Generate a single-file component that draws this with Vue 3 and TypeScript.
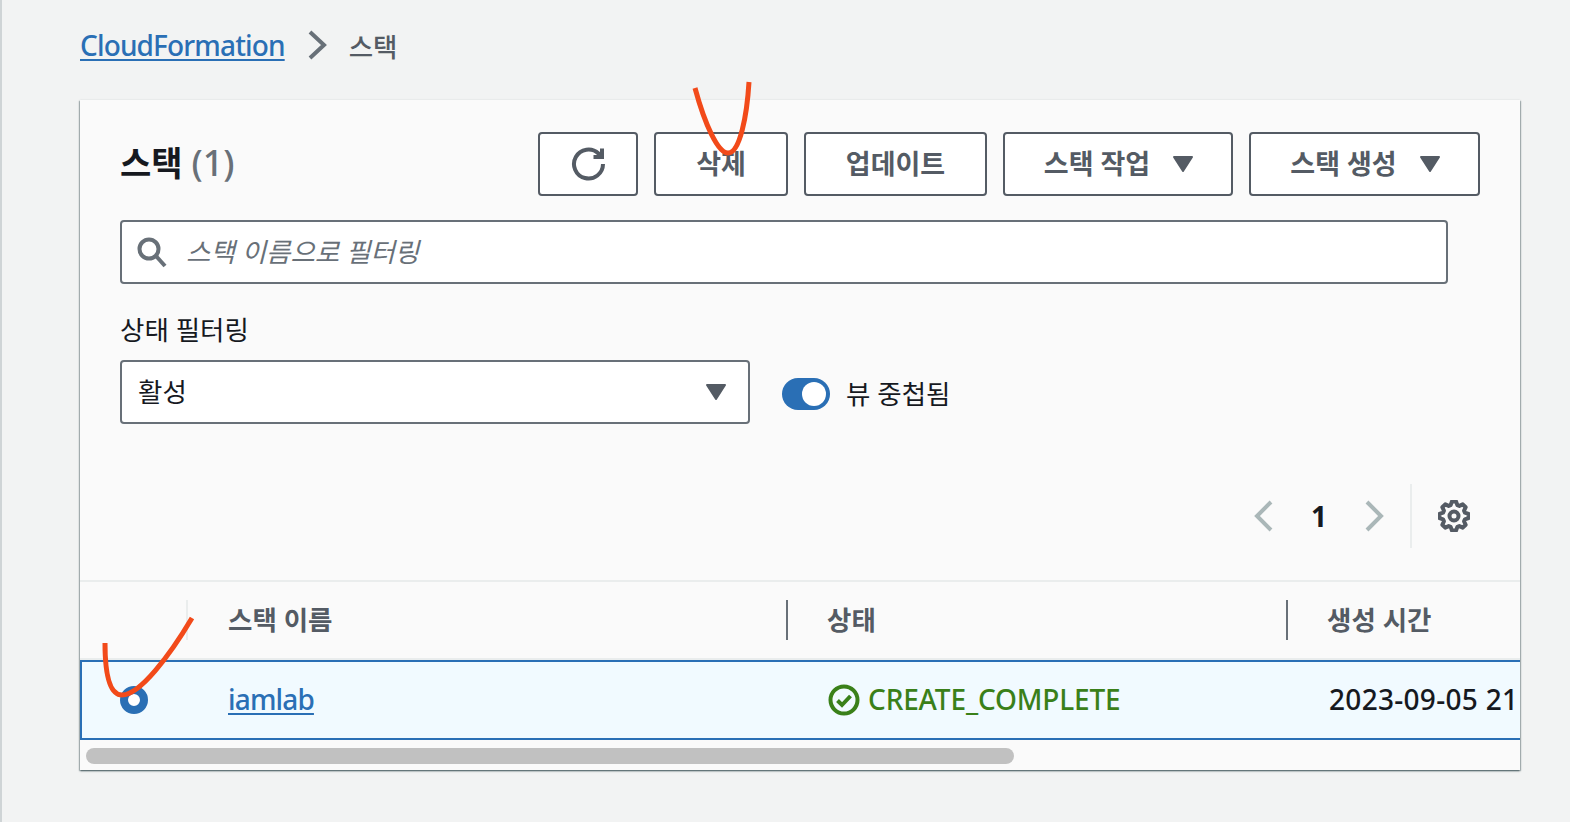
<script setup lang="ts">
import { computed } from 'vue'

const actions = [
  { label: '삭제', width: 134 },
  { label: '업데이트', width: 183 },
  { label: '스택 작업', width: 230, caret: true },
  { label: '스택 생성', width: 231, caret: true }
]

// 8 tooth outline for the preferences icon
const gearPath = computed(() => {
  const pts: string[] = []
  for (let i = 0; i < 8; i++) {
    const a = (i * Math.PI) / 4 - Math.PI / 8
    const step = Math.PI / 4
    const corners: [number, number][] = [
      [11.4, a + step * 0.12],
      [14.6, a + step * 0.32],
      [14.6, a + step * 0.68],
      [11.4, a + step * 0.88]
    ]
    for (const [r, t] of corners) {
      pts.push(`${(16 + r * Math.cos(t)).toFixed(2)} ${(16 + r * Math.sin(t)).toFixed(2)}`)
    }
  }
  return 'M' + pts.join('L') + 'Z'
})
</script>

<template>
  <div class="page">
    <nav class="crumbs">
      <a class="link">CloudFormation</a>
      <svg class="crumbIcon" width="20" height="30" viewBox="0 0 20 30">
        <path d="M3 2l14 13L3 28" />
      </svg>
      <span class="crumbCurrent">스택</span>
    </nav>

    <section class="card">
      <div class="cardBody">
        <div class="topRow">
          <h1 class="title">스택 <span class="count">(1)</span></h1>
          <div class="actions">
            <button class="btn iconBtn">
              <svg width="36" height="36" viewBox="0 0 36 36">
                <path d="M32 18a14.500 14.500 0 1 1-4.500-10.500L31 11" />
                <path d="M31 2.500V11h-8.500" />
              </svg>
            </button>
            <button
              v-for="action in actions"
              :key="action.label"
              class="btn"
              :class="{ withCaret: action.caret }"
              :style="{ width: action.width + 'px' }"
            >
              <span class="btnText">{{ action.label }}</span>
              <svg v-if="action.caret" class="caret" width="22" height="18" viewBox="0 0 22 18">
                <path d="M2 2h18l-9 14z" />
              </svg>
            </button>
          </div>
        </div>

        <div class="field search">
          <svg class="searchIcon" width="32" height="32" viewBox="0 0 32 32">
            <circle cx="13" cy="13" r="9.500" />
            <path d="M20 20l9 10" />
          </svg>
          <span class="placeholder">스택 이름으로 필터링</span>
        </div>

        <div class="label">상태 필터링</div>
        <div class="filterRow">
          <div class="field select">
            <span class="selectText">활성</span>
            <svg class="caret" width="22" height="18" viewBox="0 0 22 18">
              <path d="M2 2h18l-9 14z" />
            </svg>
          </div>
          <div class="toggle"><span class="knob"></span></div>
          <span class="toggleLabel">뷰 중첩됨</span>
        </div>

        <div class="pager">
          <svg class="pageIcon" width="20" height="32" viewBox="0 0 20 32">
            <path d="M18 2L4 16l14 14" />
          </svg>
          <span class="pageNum">1</span>
          <svg class="pageIcon" width="20" height="32" viewBox="0 0 20 32">
            <path d="M2 2l14 14L2 30" />
          </svg>
          <div class="pagerLine"></div>
          <svg class="gear" width="32" height="32" viewBox="0 0 32 32">
            <path :d="gearPath" />
            <circle cx="16" cy="16" r="4.500" />
          </svg>
        </div>
      </div>

      <div class="tableHead">
        <div class="cell firstCell"><i class="sep light"></i></div>
        <div class="cell"><span class="headText">스택 이름</span></div>
        <div class="cell"><i class="sep"></i><span class="headText">상태</span></div>
        <div class="cell"><i class="sep"></i><span class="headText">생성 시간</span></div>
      </div>
      <div class="tableRow">
        <div class="cell firstCell"><span class="radio"></span></div>
        <div class="cell"><a class="link rowText">iamlab</a></div>
        <div class="cell status">
          <svg width="32" height="32" viewBox="0 0 32 32">
            <circle cx="16" cy="16" r="13.500" />
            <path d="M9.500 16.500l4.500 4.500 8.500-9" />
          </svg>
          <span class="rowText">CREATE_COMPLETE</span>
        </div>
        <div class="cell date"><span class="rowText">2023-09-05 21</span></div>
      </div>
      <div class="scrollTrack"><div class="scrollThumb"></div></div>
    </section>

    <svg class="marks" width="1570" height="822" viewBox="0 0 1570 822">
      <path d="M695 88C705 125 718 153 728 153C740 153 747 115 749 82" />
      <path d="M105 643C105 675 110 695 122 695C140 695 170 655 192 618" />
    </svg>
  </div>
</template>

<style scoped>
.page {
  position: relative;
  box-sizing: border-box;
  height: 822px;
  overflow: hidden;
  padding-left: 78px;
  background: #f2f3f3;
  border-left: 2px solid #cfd4d6;
  font-family: "Noto Sans", "Noto Sans CJK KR", sans-serif;
  font-size: 26.500px;
  color: #16191f;
}
.crumbs {
  display: flex;
  align-items: center;
  height: 90px;
}
.link {
  font-size: 28px;
  font-weight: 500;
  letter-spacing: -0.850px;
  color: #2a6fb5;
  text-decoration: underline;
  text-underline-offset: 3px;
}
.crumbIcon {
  margin: 0 22px;
  fill: none;
  stroke: #687078;
  stroke-width: 4;
}
.crumbCurrent {
  color: #545b64;
  font-weight: 500;
}
.card {
  width: 1440px;
  margin-top: 10px;
  overflow: hidden;
  background: #fafafa;
  box-shadow: 0 1px 2px 0 rgba(0, 28, 36, 0.5), 1px 1px 1px 0 rgba(0, 28, 36, 0.2), -1px 1px 1px 0 rgba(0, 28, 36, 0.2);
}
.cardBody {
  padding: 32px 40px 32px 40px;
}
.topRow {
  display: flex;
  align-items: center;
  justify-content: space-between;
}
.title {
  margin: 0 0 3px;
  font-size: 34px;
  font-weight: 700;
  line-height: 60px;
}
.count {
  font-size: 36px;
  font-weight: 500;
  color: #687078;
}
.actions {
  display: flex;
  gap: 16px;
}
.btn {
  display: flex;
  align-items: center;
  justify-content: center;
  gap: 22px;
  box-sizing: border-box;
  height: 64px;
  padding: 0;
  background: #fff;
  border: 2px solid #545b64;
  border-radius: 4px;
  font-family: inherit;
  font-size: 27px;
  font-weight: 700;
  color: #545b64;
}
.withCaret {
  padding-left: 2px;
}
.btnText {
  padding-bottom: 3px;
}
.iconBtn {
  width: 100px;
}
.iconBtn svg {
  margin-left: 2px;
  fill: none;
  stroke: #545b64;
  stroke-width: 4;
}
.caret {
  fill: #545b64;
  stroke: #545b64;
  stroke-width: 2;
  stroke-linejoin: round;
}
.field {
  display: flex;
  align-items: center;
  box-sizing: border-box;
  height: 64px;
  background: #fff;
  border: 2px solid #687078;
  border-radius: 4px;
}
.search {
  width: 1328px;
  margin-top: 24px;
  padding-left: 14px;
}
.searchIcon {
  fill: none;
  stroke: #687078;
  stroke-width: 4;
}
.placeholder {
  margin-left: 18px;
  padding-bottom: 3px;
  font-style: italic;
  color: #687078;
}
.label {
  margin-top: 26px;
  line-height: 40px;
}
.filterRow {
  display: flex;
  align-items: center;
  margin-top: 10px;
}
.select {
  justify-content: space-between;
  width: 630px;
  padding: 0 21px 0 16px;
}
.selectText {
  padding-bottom: 3px;
}
.toggle {
  display: flex;
  align-items: center;
  justify-content: flex-end;
  box-sizing: border-box;
  width: 48px;
  height: 32px;
  margin: 4px 0 0 32px;
  padding-right: 4px;
  background: #2a6fb5;
  border-radius: 16px;
}
.knob {
  width: 24px;
  height: 24px;
  background: #fff;
  border-radius: 50%;
}
.toggleLabel {
  margin-left: 16px;
}
.pager {
  display: flex;
  align-items: center;
  justify-content: flex-end;
  height: 64px;
  margin-top: 60px;
}
.pageIcon {
  fill: none;
  stroke: #aab7b8;
  stroke-width: 4;
}
.pageNum {
  width: 92px;
  font-size: 28px;
  text-align: center;
  font-weight: 700;
}
.pagerLine {
  width: 2px;
  height: 64px;
  margin: 0 26px 0 25px;
  background: #eaeded;
}
.gear {
  fill: none;
  stroke: #545b64;
  stroke-width: 4;
  stroke-linejoin: round;
  margin-right: 10px;
}
.tableHead,
.tableRow {
  display: grid;
  align-items: center;
  box-sizing: border-box;
}
.tableHead {
  grid-template-columns: 108px 599px 500px 1fr;
  height: 80px;
  border-top: 2px solid #eaeded;
  border-bottom: 2px solid #eaeded;
  font-weight: 700;
  color: #545b64;
}
.headText {
  padding-bottom: 3px;
}
.tableRow {
  grid-template-columns: 106px 600px 501px 1fr;
  height: 80px;
  background: #f1faff;
  border: 2px solid #2a6fb5;
  border-right: none;
}
.rowText {
  padding-bottom: 2px;
}
.cell {
  display: flex;
  align-items: center;
  position: relative;
  min-width: 0;
  padding-left: 40px;
  white-space: nowrap;
}
.firstCell {
  padding-left: 0;
  justify-content: center;
  height: 40px;
}
.sep {
  position: absolute;
  left: -1px;
  top: 0;
  width: 2px;
  height: 40px;
  background: #687078;
}
.tableHead .cell {
  height: 40px;
}
.tableHead .firstCell .sep {
  left: auto;
  right: 0;
}
.sep.light {
  background: #eaeded;
}
.radio {
  box-sizing: border-box;
  width: 28px;
  height: 28px;
  margin-right: 2px;
  background: #fff;
  border: 8.500px solid #2a6fb5;
  border-radius: 50%;
}
.status {
  font-size: 28px;
  font-weight: 500;
  letter-spacing: -0.150px;
  color: #3a8019;
}
.status svg {
  flex: none;
  margin-right: 8px;
  fill: none;
  stroke: #3a8019;
  stroke-width: 4;
}
.date {
  overflow: hidden;
  font-size: 28px;
  font-weight: 500;
  letter-spacing: 0.300px;
}
.scrollTrack {
  height: 16px;
  margin: 8px 0 6px;
  padding-left: 6px;
}
.scrollThumb {
  width: 928px;
  height: 16px;
  background: #c1c1c1;
  border-radius: 8px;
}
.marks {
  position: absolute;
  left: -2px;
  top: 0;
  pointer-events: none;
}
.marks path {
  fill: none;
  stroke: #f24a1a;
  stroke-width: 5;
}
</style>
